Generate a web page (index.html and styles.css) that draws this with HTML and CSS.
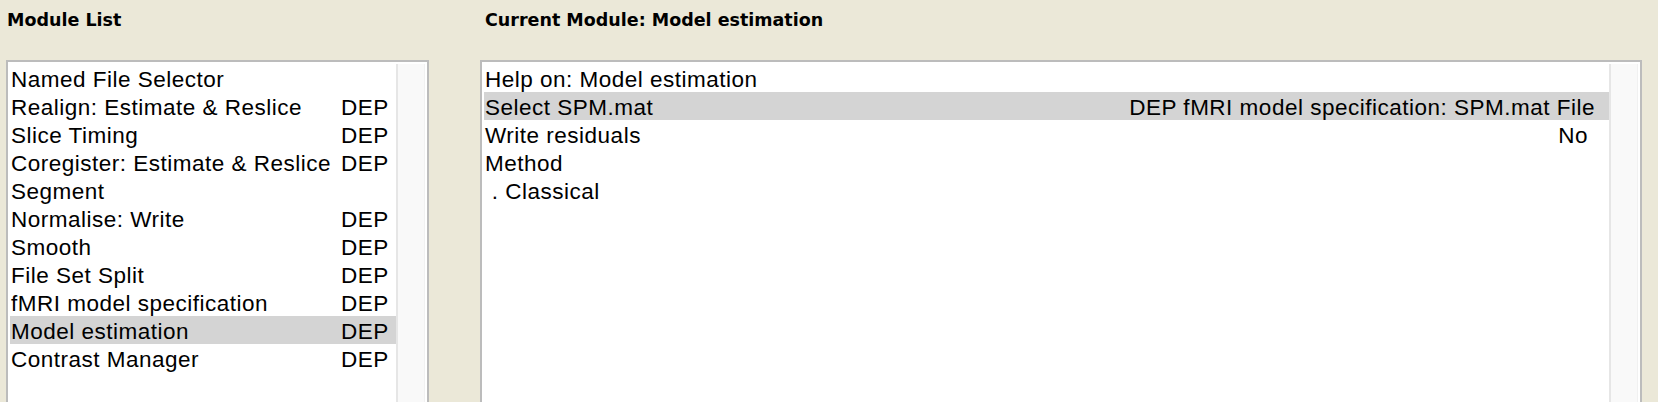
FILE: index.html
```html
<!DOCTYPE html>
<html>
<head>
<meta charset="utf-8">
<link rel="stylesheet" href="styles.css">
</head>
<body>
<div class="app">
  <section class="col col-left">
    <h2 class="heading heading-left">Module List</h2>
    <div class="panel panel-left">
      <ul class="list">
        <li class="row"><span class="name">Named File Selector</span></li>
        <li class="row"><span class="name">Realign: Estimate &amp; Reslice</span><span class="dep">DEP</span></li>
        <li class="row"><span class="name">Slice Timing</span><span class="dep">DEP</span></li>
        <li class="row"><span class="name">Coregister: Estimate &amp; Reslice</span><span class="dep">DEP</span></li>
        <li class="row"><span class="name">Segment</span></li>
        <li class="row"><span class="name">Normalise: Write</span><span class="dep">DEP</span></li>
        <li class="row"><span class="name">Smooth</span><span class="dep">DEP</span></li>
        <li class="row"><span class="name">File Set Split</span><span class="dep">DEP</span></li>
        <li class="row"><span class="name">fMRI model specification</span><span class="dep">DEP</span></li>
        <li class="row selected"><span class="name">Model estimation</span><span class="dep">DEP</span></li>
        <li class="row"><span class="name">Contrast Manager</span><span class="dep">DEP</span></li>
      </ul>
      <div class="scrollbar"></div>
    </div>
  </section>
  <section class="col col-right">
    <h2 class="heading heading-right">Current Module: Model estimation</h2>
    <div class="panel panel-right">
      <ul class="list">
        <li class="row"><span class="name">Help on: Model estimation</span></li>
        <li class="row selected"><span class="name">Select SPM.mat</span><span class="val">DEP fMRI model specification: SPM.mat File</span></li>
        <li class="row"><span class="name">Write residuals</span><span class="val val-short">No</span></li>
        <li class="row"><span class="name">Method</span></li>
        <li class="row"><span class="name"> . Classical</span></li>
      </ul>
      <div class="scrollbar"></div>
    </div>
  </section>
</div>
</body>
</html>
```
FILE: styles.css
```css
html, body {
  margin: 0;
  padding: 0;
  background: #ebe8d8;
  overflow: hidden;
}
body {
  width: 1658px;
  height: 402px;
}
.app {
  display: flex;
  align-items: flex-start;
  padding-left: 6px;
  gap: 51px;
}
.col {
  display: flex;
  flex-direction: column;
}
.col-left { width: 423px; }
.col-right { width: 1162px; }
.heading {
  margin: 0;
  padding-top: 10px;
  height: 60px;
  box-sizing: border-box;
  font-family: "DejaVu Sans", sans-serif;
  font-weight: bold;
  font-size: 17.5px;
  line-height: 20px;
  color: #000;
}
.heading-left { padding-left: 1px; }
.heading-right { padding-left: 5px; }
.panel {
  display: flex;
  height: 360px;
  box-sizing: border-box;
  border: 2px solid #bcbcbc;
  padding: 2px;
  background: #fff;
}
.list {
  list-style: none;
  margin: 0;
  padding: 0;
  flex: 1;
  font-family: "Liberation Sans", Arial, sans-serif;
  font-size: 22.5px;
  letter-spacing: 0.5px;
  color: #000;
}
.row {
  display: flex;
  height: 28px;
  box-sizing: border-box;
  padding: 3px 0 0 1px;
  line-height: 25px;
  white-space: pre;
}
.row.selected { background: #d4d4d4; }
.name { flex: 1; }
.dep {
  width: 55px;
  flex: none;
  text-align: left;
}
.val { padding-right: 14px; }
.val-short { padding-right: 21px; }
.scrollbar {
  width: 29px;
  flex: none;
  box-sizing: border-box;
  background: #f9f9f9;
  border-left: 2px solid #e6e6e6;
  border-right: 1px solid #f1f1f1;
}
```
